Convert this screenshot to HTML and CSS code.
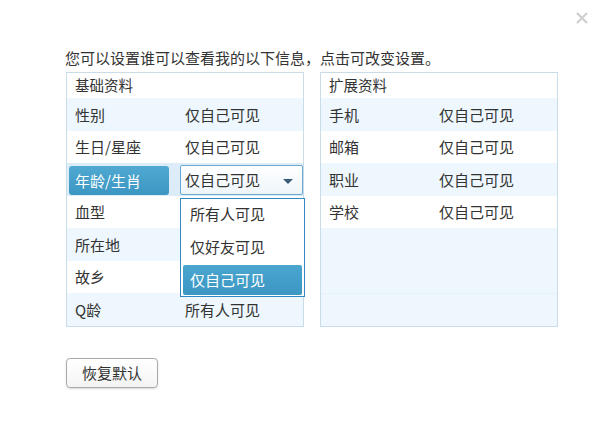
FILE: index.html
```html
<!DOCTYPE html>
<html lang="zh-CN">
<head>
  <meta charset="UTF-8" />
  <title>资料权限设置</title>
  <link rel="stylesheet" href="styles.css">
</head>
<body>
  <div class="dialog">
    <!-- 关闭按钮 -->
    <span class="close">
      <svg width="12" height="12" viewBox="0 0 12 12"><path d="M1 1L11 11M11 1L1 11" stroke="#cfcfcf" stroke-width="2.2" /></svg>
    </span>

    <p class="intro">您可以设置谁可以查看我的以下信息，点击可改变设置。</p>

    <div class="panels">
      <!-- 基础资料 -->
      <div class="panel">
        <div class="panel-head">基础资料</div>
        <div class="row"><span class="label">性别</span><span class="value">仅自己可见</span></div>
        <div class="row"><span class="label">生日/星座</span><span class="value">仅自己可见</span></div>
        <div class="row row-active">
          <span class="label label-active">年龄/生肖</span>
          <div class="select">
            <span>仅自己可见</span>
            <i class="arrow"></i>
            <ul class="options">
              <li>所有人可见</li>
              <li>仅好友可见</li>
              <li class="selected">仅自己可见</li>
            </ul>
          </div>
        </div>
        <!-- 下拉菜单盖住的三行 -->
        <div class="row"><span class="label">血型</span><span class="value"></span></div>
        <div class="row"><span class="label">所在地</span><span class="value"></span></div>
        <div class="row"><span class="label">故乡</span><span class="value"></span></div>
        <div class="row"><span class="label">Q龄</span><span class="value">所有人可见</span></div>
      </div>

      <!-- 扩展资料 -->
      <div class="panel">
        <div class="panel-head">扩展资料</div>
        <div class="row"><span class="label">手机</span><span class="value">仅自己可见</span></div>
        <div class="row"><span class="label">邮箱</span><span class="value">仅自己可见</span></div>
        <div class="row"><span class="label">职业</span><span class="value">仅自己可见</span></div>
        <div class="row"><span class="label">学校</span><span class="value">仅自己可见</span></div>
        <div class="row"></div>
        <div class="row"></div>
        <div class="row row-line"></div>
      </div>
    </div>

    <button type="button" class="reset">恢复默认</button>
  </div>
</body>
</html>
```

FILE: styles.css
```css
body {
  margin: 0;
  background: #fff;
  font-family: "Noto Sans CJK SC", "Noto Sans", sans-serif;
  color: #333;
}

.dialog {
  position: relative;
  width: 601px;
  height: 434px;
  padding: 48px 0 0 66px;
  box-sizing: border-box;
}

.close {
  position: absolute;
  top: 12px;
  left: 576px;
  width: 12px;
  height: 12px;
}

.close svg {
  display: block;
}

.intro {
  margin: 0 0 4px -1px;
  font-size: 15px;
  line-height: 20px;
}

.panels {
  display: flex;
  gap: 16px;
}

.panel {
  width: 238px;
  border: 1px solid #c9dce8;
  box-sizing: border-box;
  background: #fff;
}

.panel-head {
  height: 25px;
  line-height: 24px;
  padding-left: 8px;
  font-size: 14.5px;
}

.row {
  display: flex;
  align-items: center;
  height: 32.5px;
  font-size: 15px;
}

.row:nth-child(even) {
  background: #edf7fd;
}

.panel:last-child .row:nth-child(n+6) {
  background: #edf7fd;
}

.row-line {
  border-top: 1px solid #e6f1f7;
  box-sizing: border-box;
}

.label {
  width: 118px;
  padding-left: 8px;
  box-sizing: border-box;
}

.row-active {
  position: relative;
  align-items: flex-start;
  background: #dcedf9 !important;
}

.label-active {
  width: 101px;
  height: 29px;
  margin: 3px 11px 0 2px;
  padding-left: 6px;
  line-height: 29px;
  color: #fff;
  background: linear-gradient(#4fa9d1, #3b96c2);
  border-radius: 3px;
}

.select {
  position: relative;
  width: 124px;
  height: 30px;
  margin-top: 2px;
  padding-left: 4px;
  box-sizing: border-box;
  line-height: 28px;
  border: 1px solid #6aa7d0;
  border-radius: 2px;
  background: linear-gradient(#fff, #eef5fa);
}

.arrow {
  position: absolute;
  right: 9px;
  top: 13px;
  width: 0;
  height: 0;
  border-left: 5px solid transparent;
  border-right: 5px solid transparent;
  border-top: 5px solid #3c5b77;
}

.options {
  position: absolute;
  top: 32px;
  left: -1px;
  z-index: 2;
  width: 125px;
  margin: 0;
  padding: 0 0 1px;
  list-style: none;
  background: #fff;
  border: 1px solid #3289c2;
  box-sizing: border-box;
}

.options li {
  height: 30px;
  margin: 0 2px 3px;
  padding-left: 7px;
  line-height: 30px;
}

.options li:last-child {
  margin-bottom: 0;
}

.options .selected {
  color: #fff;
  border-radius: 2px;
  background: linear-gradient(#4aa6cf, #3b97c3);
}

.reset {
  margin-top: 31px;
  width: 92px;
  height: 30px;
  font-family: inherit;
  font-size: 15px;
  color: #333;
  background: linear-gradient(#fff, #f4f4f4);
  border: 1px solid #a9a9a9;
  border-radius: 4px;
  box-shadow: 0 1px 2px rgba(0, 0, 0, 0.15);
}
```
